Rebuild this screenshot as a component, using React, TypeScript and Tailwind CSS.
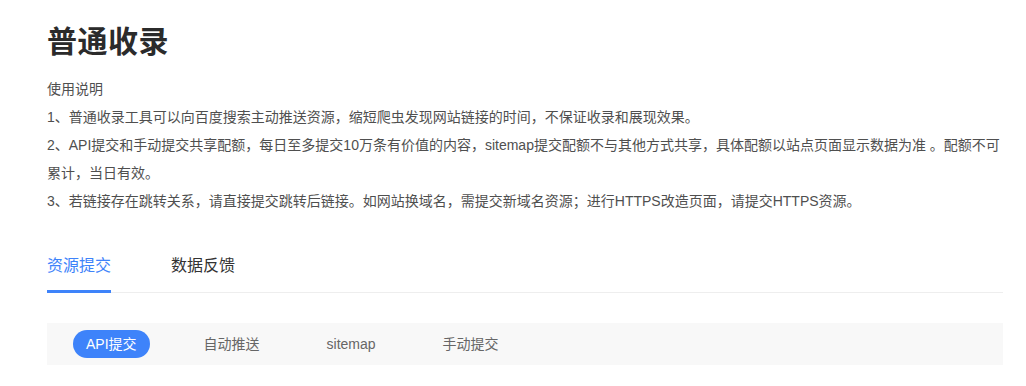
import { useState } from 'react';

const font = { fontFamily: '"Liberation Sans", "Noto Sans CJK SC", sans-serif' };

const notes = [
    '使用说明',
    '1、普通收录工具可以向百度搜索主动推送资源，缩短爬虫发现网站链接的时间，不保证收录和展现效果。',
    '2、API提交和手动提交共享配额，每日至多提交10万条有价值的内容，sitemap提交配额不与其他方式共享，具体配额以站点页面显示数据为准 。配额不可累计，当日有效。',
    '3、若链接存在跳转关系，请直接提交跳转后链接。如网站换域名，需提交新域名资源；进行HTTPS改造页面，请提交HTTPS资源。',
];

const tabs = ['资源提交', '数据反馈'];
const methods = ['API提交', '自动推送', 'sitemap', '手动提交'];

const App = () => {
    const [tab, setTab] = useState(0);
    const [method, setMethod] = useState(0);

    return (
        <div className="bg-white min-h-screen pl-[47px] pt-[20px] w-[1003px]" style={font}>
            <h1 className="text-[30px] leading-[44px] font-bold text-[#2b2b2b] tracking-[0.5px]">普通收录</h1>

            {/* Notes */}
            <div className="mt-[11px] text-[14px] leading-[28px] text-[#4f4f4f]">
                {notes.map((line) => (
                    <p key={line}>{line}</p>
                ))}
            </div>

            {/* Tabs */}
            <div className="mt-[39px] flex gap-[60px] border-b border-[#eeeeee]">
                {tabs.map((name, i) => (
                    <button
                        key={name}
                        onClick={() => setTab(i)}
                        className={
                            'pb-[12px] text-[16px] leading-[24px] -mb-px border-b-[3px] ' +
                            (tab === i ? 'text-[#3e83fa] border-[#3e83fa]' : 'text-[#333] border-transparent')
                        }
                    >
                        {name}
                    </button>
                ))}
            </div>

            {/* Submit methods */}
            <div className="mt-[30px] h-[42px] bg-[#f8f8f8] flex items-center pl-[26px] gap-[41px]">
                {methods.map((name, i) => (
                    <button
                        key={name}
                        onClick={() => setMethod(i)}
                        className={
                            'h-[28px] px-[13px] rounded-full text-[14px] leading-[28px] ' +
                            (method === i ? 'bg-[#3e83fa] text-white' : 'text-[#666]')
                        }
                    >
                        {name}
                    </button>
                ))}
            </div>
        </div>
    );
};

export default App;
